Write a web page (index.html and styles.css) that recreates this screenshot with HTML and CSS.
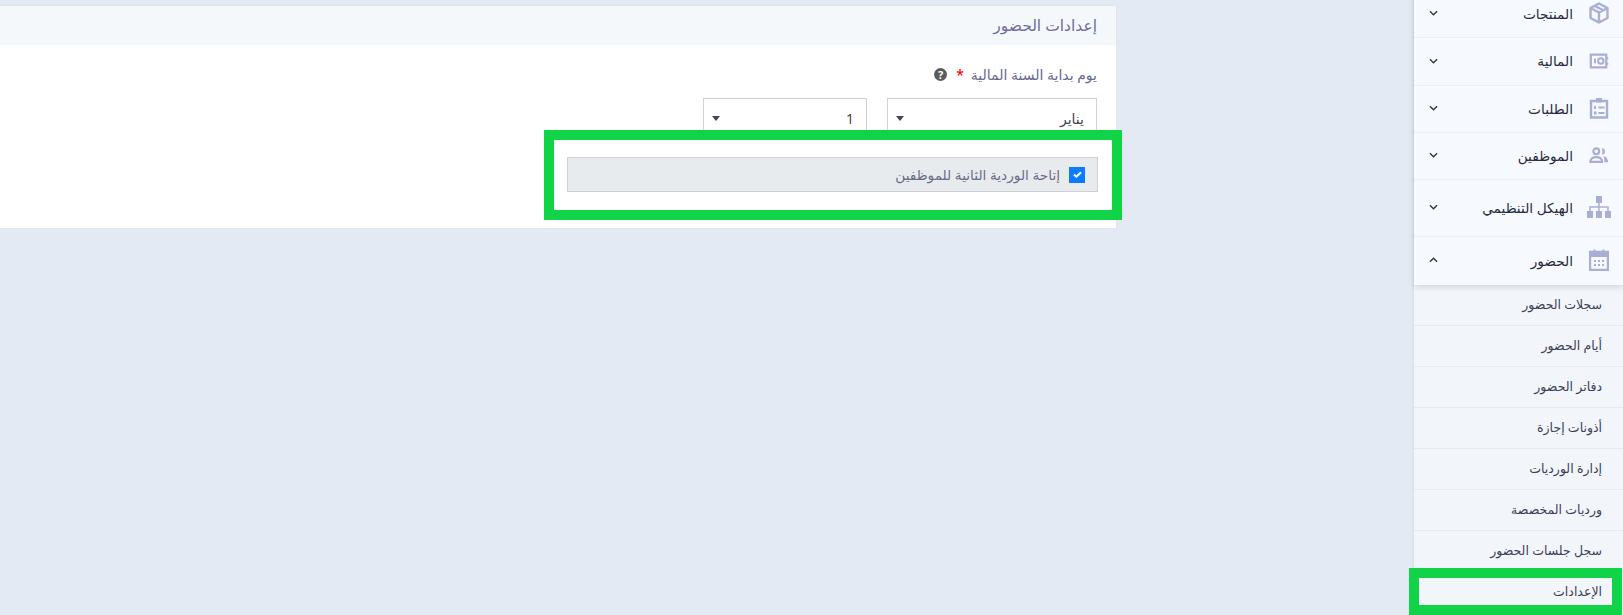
FILE: index.html
```html
<!DOCTYPE html>
<html lang="ar" dir="rtl">

	<head>
		<meta charset="UTF-8">
		<title>إعدادات الحضور</title>
		<link rel="stylesheet" href="styles.css">
	</head>

	<body>
		<div class="page">
			<aside class="sidebar">
				<ul class="menu">
					<li class="menu-item">
						<svg class="menu-icon" viewBox="0 0 20 22"><path d="M10 1.500 18.500 6v10L10 20.500 1.500 16V6zM1.500 6 10 10.500 18.500 6M10 10.500v10M5.500 3.700l8.700 4.600" fill="none" stroke="currentColor" stroke-width="2.400" stroke-linejoin="round"/></svg>
						<span class="menu-label">المنتجات</span>
						<svg class="chevron" viewBox="0 0 10 6"><path d="M1 1l4 4 4-4" fill="none" stroke="currentColor" stroke-width="1.500"/></svg>
					</li>
					<li class="menu-item menu-item-mid">
						<svg class="menu-icon" viewBox="0 0 22 18"><path d="M2 2h17v14H2zM20 5v2M20 11v2" fill="none" stroke="currentColor" stroke-width="2.400"/><path d="M5.500 6.500h2.200v5H5.500z" fill="currentColor"/><circle cx="13" cy="9" r="3" fill="none" stroke="currentColor" stroke-width="2.200"/></svg>
						<span class="menu-label">المالية</span>
						<svg class="chevron" viewBox="0 0 10 6"><path d="M1 1l4 4 4-4" fill="none" stroke="currentColor" stroke-width="1.500"/></svg>
					</li>
					<li class="menu-item">
						<svg class="menu-icon" viewBox="0 0 20 22"><path d="M2 4h16v16.500H2z" fill="none" stroke="currentColor" stroke-width="2.400"/><path d="M7 1h6v4.500H7zM5 9h2v3H5zM5 14.500h2.500v3H5zM9.500 9.500h6v2h-6zM9.500 15h6v2h-6z" fill="currentColor"/></svg>
						<span class="menu-label">الطلبات</span>
						<svg class="chevron" viewBox="0 0 10 6"><path d="M1 1l4 4 4-4" fill="none" stroke="currentColor" stroke-width="1.500"/></svg>
					</li>
					<li class="menu-item">
						<svg class="menu-icon" viewBox="0 0 22 18"><circle cx="8" cy="5" r="3.200" fill="none" stroke="currentColor" stroke-width="2.400"/><path d="M1.500 16.500c0-7 13-7 13 0z" fill="none" stroke="currentColor" stroke-width="2.400"/><path d="M14 1.500a3.600 3.600 0 0 1 0 7.200c1-2.200 1-5 0-7.200zM16 10c3 .5 5 3 5 7h-4c0-3-.5-5-1-7z" fill="currentColor"/></svg>
						<span class="menu-label">الموظفين</span>
						<svg class="chevron" viewBox="0 0 10 6"><path d="M1 1l4 4 4-4" fill="none" stroke="currentColor" stroke-width="1.500"/></svg>
					</li>
					<li class="menu-item menu-item-tall">
						<svg class="menu-icon menu-icon-wide" viewBox="0 0 24 22"><path d="M9 0h6v7H9zM0 15h6v7H0zM9 15h6v7H9zM18 15h6v7h-6z" fill="currentColor"/><path d="M12 7v8M3 15v-4h18v4" fill="none" stroke="currentColor" stroke-width="1.500"/></svg>
						<span class="menu-label">الهيكل التنظيمي</span>
						<svg class="chevron" viewBox="0 0 10 6"><path d="M1 1l4 4 4-4" fill="none" stroke="currentColor" stroke-width="1.500"/></svg>
					</li>
					<li class="menu-item menu-item-open">
						<svg class="menu-icon" viewBox="0 0 20 22"><path d="M1 3h18v18H1z" fill="none" stroke="currentColor" stroke-width="2.400"/><path d="M1 3h18v5H1zM4.500 .5h2v3h-2zM13.500 .5h2v3h-2z" fill="currentColor"/><path d="M5 11h2v2H5zM9 11h2v2H9zM13 11h2v2h-2zM5 15h2v2H5zM9 15h2v2H9zM13 15h2v2h-2z" fill="currentColor"/></svg>
						<span class="menu-label">الحضور</span>
						<svg class="chevron" viewBox="0 0 10 6"><path d="M1 5l4-4 4 4" fill="none" stroke="currentColor" stroke-width="1.500"/></svg>
					</li>
				</ul>
				<ul class="submenu">
					<li>سجلات الحضور</li>
					<li>أيام الحضور</li>
					<li>دفاتر الحضور</li>
					<li>أذونات إجازة</li>
					<li>إدارة الورديات</li>
					<li>ورديات المخصصة</li>
					<li>سجل جلسات الحضور</li>
					<li>الإعدادات</li>
				</ul>
			</aside>

			<main class="content">
				<section class="card">
					<h2 class="card-title">إعدادات الحضور</h2>
					<div class="card-body">
						<div class="field-label">
							<span>يوم بداية السنة المالية</span>
							<span class="required">*</span>
							<span class="help">?</span>
						</div>
						<div class="select-row">
							<div class="select select-month">
								<span>يناير</span>
								<i class="select-arrow"></i>
							</div>
							<div class="select select-day">
								<span>1</span>
								<i class="select-arrow"></i>
							</div>
						</div>
						<label class="check-row">
							<span class="check-box">
								<svg viewBox="0 0 10 8"><path d="M1 4l2.700 2.500L9 1.500" fill="none" stroke="#fff" stroke-width="2.400"/></svg>
							</span>
							<span>إتاحة الوردية الثانية للموظفين</span>
						</label>
					</div>
				</section>
			</main>

			<div class="mark mark-form"></div>
			<div class="mark mark-settings"></div>
		</div>
	</body>

</html>
```

FILE: styles.css
```css
html,
body,
ul,
li,
h2 {
	margin: 0;
	padding: 0;
}

body {
	background-color: #e3eaf3;
	font-family: "Noto Sans", "DejaVu Sans", sans-serif;
	overflow: hidden;
}

ul {
	list-style: none;
}

.page {
	position: relative;
	display: flex;
	height: 615px;
	overflow: hidden;
}

/* sidebar */
.sidebar {
	width: 209px;
	margin-top: -9px;
	flex-shrink: 0;
	box-shadow: -1px 0 2px rgba(0, 0, 0, .06);
}

.menu {
	position: relative;
	background-color: #f6f9fd;
	box-shadow: 0 2px 6px rgba(0, 0, 0, .14);
}

.menu-item {
	display: flex;
	align-items: center;
	height: 47px;
	box-sizing: border-box;
	padding: 0 14px 2px 15px;
	border-bottom: 1px solid #ebeef3;
	color: #262a3d;
	font-size: 13.700px;
	font-weight: 500;
}

.menu-item-mid {
	height: 48px;
}

.menu-item-tall {
	height: 57px;
}

.menu-item-open {
	height: 48px;
	border-bottom: 0;
}

.menu-icon {
	width: 20px;
	height: 22px;
	margin-left: 16px;
	color: #a9aed3;
	flex-shrink: 0;
}

.menu-icon-wide {
	width: 24px;
	margin-right: -2px;
	margin-left: 14px;
}

.menu-label {
	flex: 1;
}

.chevron {
	width: 9px;
	height: 6px;
	color: #2f3447;
}

.submenu {
	background-color: #f2f5fa;
	height: 340px;
}

.submenu li {
	height: 41px;
	box-sizing: border-box;
	padding: 0 21px 0 0;
	border-bottom: 1px solid #e6e9ee;
	line-height: 40px;
	color: #3c3f58;
	font-size: 12.500px;
}

/* main */
.content {
	flex: 1;
	padding: 5px 297px 0 0;
	min-width: 0;
}

.card {
	height: 224px;
	box-sizing: border-box;
	background-color: #fff;
	border: 1px solid #e3e5ea;
	border-left: 0;
	overflow: hidden;
}

.card-title {
	height: 39px;
	padding-right: 19px;
	background-color: #f5f8fb;
	color: #6d6f9c;
	font-size: 15.500px;
	font-weight: 400;
	line-height: 38px;
}

.card-body {
	padding: 17px 19px 0 0;
}

.field-label {
	display: flex;
	align-items: center;
	gap: 2px;
	height: 24px;
	color: #66698f;
	font-size: 14px;
	font-weight: 500;
}

.required {
	color: #f00;
	margin: 0 5px;
}

.help {
	width: 13px;
	height: 13px;
	margin-right: 2px;
	border-radius: 50%;
	background-color: #5c5c5c;
	color: #fff;
	font-size: 11px;
	font-weight: 700;
	line-height: 13px;
	text-align: center;
}

.select-row {
	display: flex;
	gap: 20px;
	margin-top: 12px;
}

.select {
	display: flex;
	align-items: center;
	justify-content: space-between;
	height: 40px;
	box-sizing: border-box;
	padding: 0 12px 0 8px;
	border: 1px solid #ced2d8;
	color: #3f4257;
	font-size: 14px;
}

.select-month {
	width: 210px;
}

.select-day {
	width: 164px;
}

.select-arrow {
	width: 0;
	height: 0;
	border-top: 5px solid #3e4554;
	border-right: 4px solid transparent;
	border-left: 4px solid transparent;
}

.check-row {
	display: flex;
	align-items: center;
	gap: 9px;
	width: 531px;
	height: 35px;
	box-sizing: border-box;
	margin-top: 19px;
	margin-right: -1px;
	padding-right: 12px;
	background-color: #e8ebee;
	border: 1px solid #ced2d8;
	color: #6a6d8a;
	font-size: 13.700px;
	font-weight: 500;
}

.check-box {
	display: flex;
	align-items: center;
	justify-content: center;
	width: 16px;
	height: 16px;
	background-color: #0d7bff;
}

.check-box svg {
	width: 9px;
	height: 7px;
}

/* green highlights */
.mark {
	position: absolute;
	box-sizing: border-box;
	border: 10px solid #10d348;
}

.mark-form {
	left: 544px;
	top: 130px;
	width: 578px;
	height: 90px;
}

.mark-settings {
	left: 1409px;
	top: 568px;
	width: 213px;
	height: 47px;
}
```
